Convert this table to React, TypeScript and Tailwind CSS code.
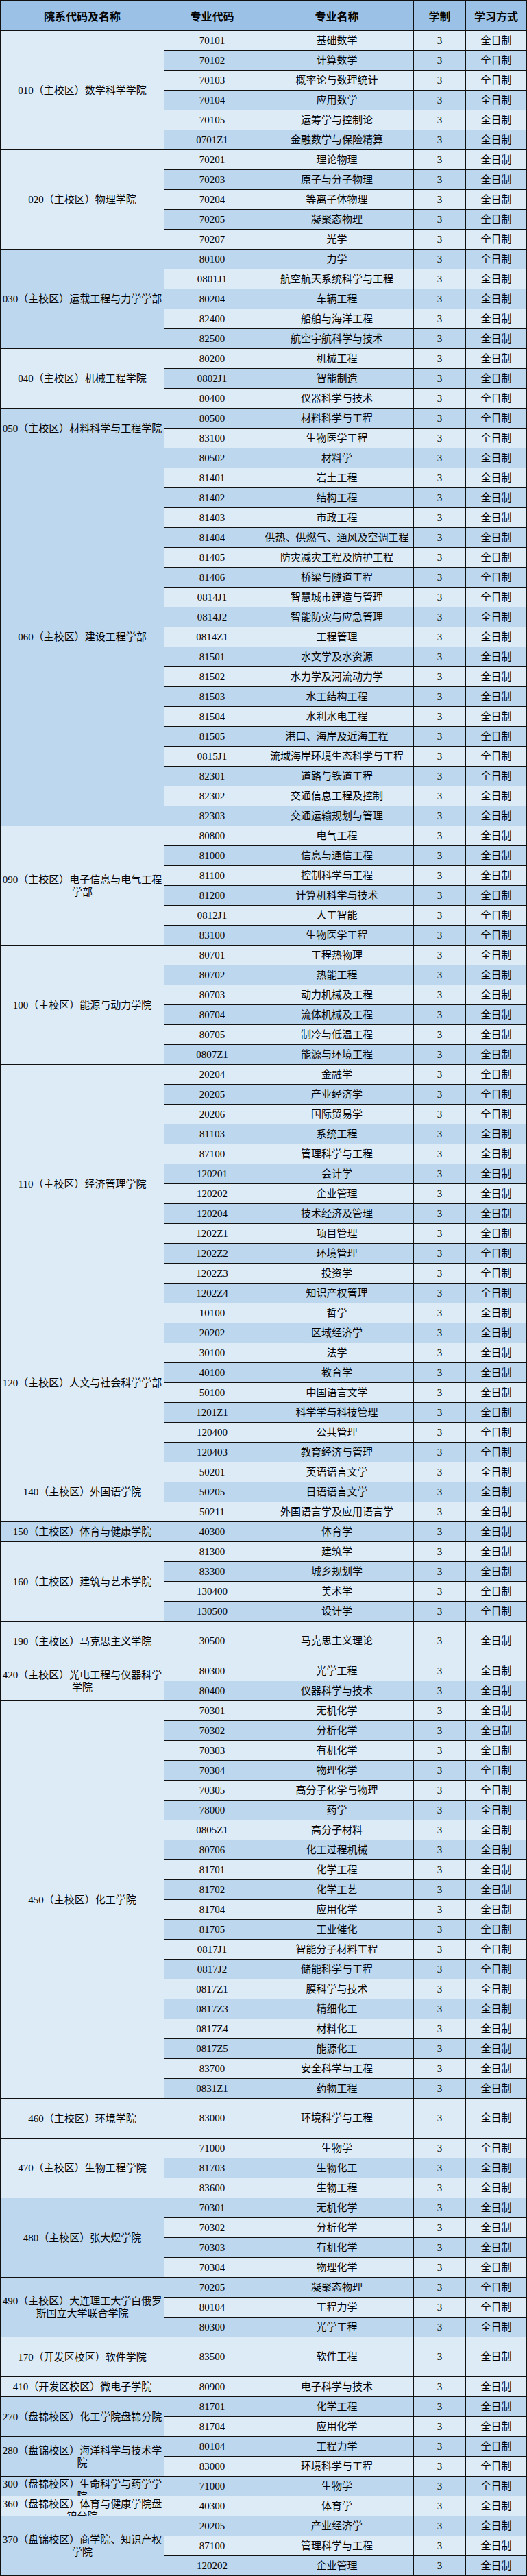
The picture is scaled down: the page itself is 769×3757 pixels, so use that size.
import React from "react";

type Row = [string, string, number?];
type Group = { label: string[]; rows: Row[]; clip?: boolean };

const groups: Group[] = [
  {
    label: ["010（主校区）数学科学学院"],
    rows: [
      ["70101", "基础数学"],
      ["70102", "计算数学"],
      ["70103", "概率论与数理统计"],
      ["70104", "应用数学"],
      ["70105", "运筹学与控制论"],
      ["0701Z1", "金融数学与保险精算"],
    ],
  },
  {
    label: ["020（主校区）物理学院"],
    rows: [
      ["70201", "理论物理"],
      ["70203", "原子与分子物理"],
      ["70204", "等离子体物理"],
      ["70205", "凝聚态物理"],
      ["70207", "光学"],
    ],
  },
  {
    label: ["030（主校区）运载工程与力学学部"],
    rows: [
      ["80100", "力学"],
      ["0801J1", "航空航天系统科学与工程"],
      ["80204", "车辆工程"],
      ["82400", "船舶与海洋工程"],
      ["82500", "航空宇航科学与技术"],
    ],
  },
  {
    label: ["040（主校区）机械工程学院"],
    rows: [
      ["80200", "机械工程"],
      ["0802J1", "智能制造"],
      ["80400", "仪器科学与技术"],
    ],
  },
  {
    label: ["050（主校区）材料科学与工程学院"],
    rows: [
      ["80500", "材料科学与工程"],
      ["83100", "生物医学工程"],
    ],
  },
  {
    label: ["060（主校区）建设工程学部"],
    rows: [
      ["80502", "材料学"],
      ["81401", "岩土工程"],
      ["81402", "结构工程"],
      ["81403", "市政工程"],
      ["81404", "供热、供燃气、通风及空调工程"],
      ["81405", "防灾减灾工程及防护工程"],
      ["81406", "桥梁与隧道工程"],
      ["0814J1", "智慧城市建造与管理"],
      ["0814J2", "智能防灾与应急管理"],
      ["0814Z1", "工程管理"],
      ["81501", "水文学及水资源"],
      ["81502", "水力学及河流动力学"],
      ["81503", "水工结构工程"],
      ["81504", "水利水电工程"],
      ["81505", "港口、海岸及近海工程"],
      ["0815J1", "流域海岸环境生态科学与工程"],
      ["82301", "道路与铁道工程"],
      ["82302", "交通信息工程及控制"],
      ["82303", "交通运输规划与管理"],
    ],
  },
  {
    label: ["090（主校区）电子信息与电气工程", "学部"],
    rows: [
      ["80800", "电气工程"],
      ["81000", "信息与通信工程"],
      ["81100", "控制科学与工程"],
      ["81200", "计算机科学与技术"],
      ["0812J1", "人工智能"],
      ["83100", "生物医学工程"],
    ],
  },
  {
    label: ["100（主校区）能源与动力学院"],
    rows: [
      ["80701", "工程热物理"],
      ["80702", "热能工程"],
      ["80703", "动力机械及工程"],
      ["80704", "流体机械及工程"],
      ["80705", "制冷与低温工程"],
      ["0807Z1", "能源与环境工程"],
    ],
  },
  {
    label: ["110（主校区）经济管理学院"],
    rows: [
      ["20204", "金融学"],
      ["20205", "产业经济学"],
      ["20206", "国际贸易学"],
      ["81103", "系统工程"],
      ["87100", "管理科学与工程"],
      ["120201", "会计学"],
      ["120202", "企业管理"],
      ["120204", "技术经济及管理"],
      ["1202Z1", "项目管理"],
      ["1202Z2", "环境管理"],
      ["1202Z3", "投资学"],
      ["1202Z4", "知识产权管理"],
    ],
  },
  {
    label: ["120（主校区）人文与社会科学学部"],
    rows: [
      ["10100", "哲学"],
      ["20202", "区域经济学"],
      ["30100", "法学"],
      ["40100", "教育学"],
      ["50100", "中国语言文学"],
      ["1201Z1", "科学学与科技管理"],
      ["120400", "公共管理"],
      ["120403", "教育经济与管理"],
    ],
  },
  {
    label: ["140（主校区）外国语学院"],
    rows: [
      ["50201", "英语语言文学"],
      ["50205", "日语语言文学"],
      ["50211", "外国语言学及应用语言学"],
    ],
  },
  {
    label: ["150（主校区）体育与健康学院"],
    rows: [["40300", "体育学"]],
  },
  {
    label: ["160（主校区）建筑与艺术学院"],
    rows: [
      ["81300", "建筑学"],
      ["83300", "城乡规划学"],
      ["130400", "美术学"],
      ["130500", "设计学"],
    ],
  },
  {
    label: ["190（主校区）马克思主义学院"],
    rows: [["30500", "马克思主义理论", 2]],
  },
  {
    label: ["420（主校区）光电工程与仪器科学", "学院"],
    rows: [
      ["80300", "光学工程"],
      ["80400", "仪器科学与技术"],
    ],
  },
  {
    label: ["450（主校区）化工学院"],
    rows: [
      ["70301", "无机化学"],
      ["70302", "分析化学"],
      ["70303", "有机化学"],
      ["70304", "物理化学"],
      ["70305", "高分子化学与物理"],
      ["78000", "药学"],
      ["0805Z1", "高分子材料"],
      ["80706", "化工过程机械"],
      ["81701", "化学工程"],
      ["81702", "化学工艺"],
      ["81704", "应用化学"],
      ["81705", "工业催化"],
      ["0817J1", "智能分子材料工程"],
      ["0817J2", "储能科学与工程"],
      ["0817Z1", "膜科学与技术"],
      ["0817Z3", "精细化工"],
      ["0817Z4", "材料化工"],
      ["0817Z5", "能源化工"],
      ["83700", "安全科学与工程"],
      ["0831Z1", "药物工程"],
    ],
  },
  {
    label: ["460（主校区）环境学院"],
    rows: [["83000", "环境科学与工程", 2]],
  },
  {
    label: ["470（主校区）生物工程学院"],
    rows: [
      ["71000", "生物学"],
      ["81703", "生物化工"],
      ["83600", "生物工程"],
    ],
  },
  {
    label: ["480（主校区）张大煜学院"],
    rows: [
      ["70301", "无机化学"],
      ["70302", "分析化学"],
      ["70303", "有机化学"],
      ["70304", "物理化学"],
    ],
  },
  {
    label: ["490（主校区）大连理工大学白俄罗", "斯国立大学联合学院"],
    rows: [
      ["70205", "凝聚态物理"],
      ["80104", "工程力学"],
      ["80300", "光学工程"],
    ],
  },
  {
    label: ["170（开发区校区）软件学院"],
    rows: [["83500", "软件工程", 2]],
  },
  {
    label: ["410（开发区校区）微电子学院"],
    rows: [["80900", "电子科学与技术"]],
  },
  {
    label: ["270（盘锦校区）化工学院盘锦分院"],
    rows: [
      ["81701", "化学工程"],
      ["81704", "应用化学"],
    ],
  },
  {
    label: ["280（盘锦校区）海洋科学与技术学", "院"],
    rows: [
      ["80104", "工程力学"],
      ["83000", "环境科学与工程"],
    ],
  },
  {
    label: ["300（盘锦校区）生命科学与药学学", "院"],
    clip: true,
    rows: [["71000", "生物学"]],
  },
  {
    label: ["360（盘锦校区）体育与健康学院盘", "锦分院"],
    clip: true,
    rows: [["40300", "体育学"]],
  },
  {
    label: ["370（盘锦校区）商学院、知识产权", "学院"],
    rows: [
      ["20205", "产业经济学"],
      ["87100", "管理科学与工程"],
      ["120202", "企业管理"],
    ],
  },
];

const LIGHT = "bg-[#ddebf7]";
const DARK = "bg-[#bdd7ee]";

export default function App() {
  const cells: React.ReactNode[] = [];
  let idx = 0;
  groups.forEach((g, gi) => {
    const total = g.rows.reduce((s, r) => s + (r[2] ?? 1), 0);
    const labelBg = idx % 2 === 0 ? LIGHT : DARK;
    cells.push(
      <div
        key={`l${gi}`}
        style={{ gridRow: `span ${total}` }}
        className={`col-start-1 border-r border-b border-[#111] ${labelBg} flex flex-col ${
          g.clip ? "justify-start pt-[2px] overflow-hidden" : "justify-center"
        } items-center text-center text-[15px] leading-[18px] whitespace-nowrap`}
      >
        {g.label.map((t, i) => (
          <div key={i}>{t}</div>
        ))}
      </div>
    );
    g.rows.forEach((r, ri) => {
      const span = r[2] ?? 1;
      const bg = idx % 2 === 0 ? LIGHT : DARK;
      const st = span > 1 ? { gridRow: `span ${span}` } : undefined;
      const base = `border-r border-b border-[#111] ${bg} flex items-center justify-center text-[15px] whitespace-nowrap`;
      cells.push(
        <div key={`c${gi}-${ri}`} style={st} className={`col-start-2 ${base}`}>
          {r[0]}
        </div>,
        <div key={`n${gi}-${ri}`} style={st} className={`col-start-3 ${base}`}>
          {r[1]}
        </div>,
        <div key={`y${gi}-${ri}`} style={st} className={`col-start-4 ${base}`}>
          3
        </div>,
        <div key={`m${gi}-${ri}`} style={st} className={`col-start-5 ${base}`}>
          全日制
        </div>
      );
      idx += span;
    });
  });

  const head = "border-r border-b border-[#111] bg-[#9bc2e6] flex items-center justify-center text-[16px] font-bold";

  return (
    <div className="w-[769px] bg-white font-['Liberation_Serif','Noto_Sans_CJK_SC',serif] text-black">
      <div className="grid grid-cols-[239px_140px_224px_76px_89px] grid-rows-[44px] auto-rows-[29px] border-t border-l border-[#111]">
        <div className={`col-start-1 ${head} font-['Noto_Sans_CJK_SC',sans-serif]`}>院系代码及名称</div>
        <div className={`col-start-2 ${head} font-['Noto_Sans_CJK_SC',sans-serif]`}>专业代码</div>
        <div className={`col-start-3 ${head} font-['Noto_Sans_CJK_SC',sans-serif]`}>专业名称</div>
        <div className={`col-start-4 ${head} font-['Noto_Sans_CJK_SC',sans-serif]`}>学制</div>
        <div className={`col-start-5 ${head} font-['Noto_Sans_CJK_SC',sans-serif]`}>学习方式</div>
        {cells}
      </div>
    </div>
  );
}
